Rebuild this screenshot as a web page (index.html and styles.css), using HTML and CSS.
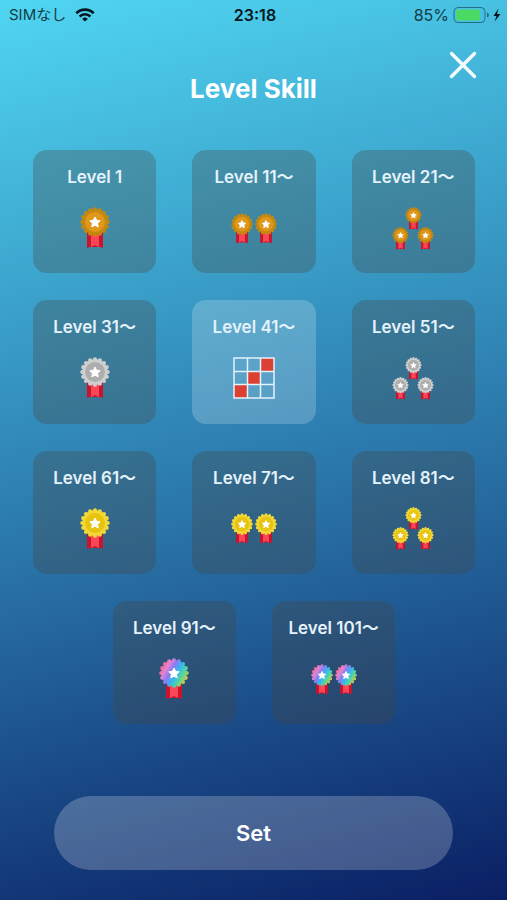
FILE: index.html
```html
<!DOCTYPE html>
<html lang="en">
<head>
<meta charset="utf-8">
<meta name="viewport" content="width=device-width, initial-scale=1">
<title>Level Skill</title>
<link rel="stylesheet" href="styles.css">
</head>
<body>
<svg class="defs" aria-hidden="true">
  <defs>
    <linearGradient id="rainbow" gradientUnits="userSpaceOnUse" x1="2" y1="8" x2="27" y2="23">
      <stop offset="0" stop-color="#f0648c"/>
      <stop offset=".2" stop-color="#e684cc"/>
      <stop offset=".38" stop-color="#8a7cf4"/>
      <stop offset=".58" stop-color="#35b6f2"/>
      <stop offset=".78" stop-color="#4ed6a4"/>
      <stop offset="1" stop-color="#d8c840"/>
    </linearGradient>
    <symbol id="medal" viewBox="0 0 30 42">
      <path d="M7 25h16v16l-3-1h-10l-3 1z" fill="#c8142c"/>
      <path d="M11 25h8v15l-4-2-4 2z" fill="#fb4658"/>
      <circle class="medal-edge" cx="15" cy="15" r="12.7" pathLength="16" stroke-width="4.2" stroke-linecap="round" stroke-dasharray="0 1"/>
      <circle class="medal-face" cx="15" cy="15" r="10"/>
      <path d="M15 10l1.6 3.3 3.6.5-2.6 2.5.6 3.6-3.2-1.7-3.2 1.7.6-3.6-2.6-2.5 3.6-.5z" fill="#fff" stroke="#fff" stroke-width="1" stroke-linejoin="round"/>
    </symbol>
  </defs>
</svg>
<div class="screen">
  <div class="status">
    <div class="status-left">
      <span>SIMなし</span>
      <svg width="20" height="14" viewBox="0 0 20 14" fill="none" stroke="#06161c" stroke-width="2.6" aria-hidden="true">
        <path d="M1.3 5.2a12.4 12.4 0 0 1 17.4 0M4.6 8.5a7.7 7.7 0 0 1 10.8 0"/>
        <path d="M10 13.6L7.2 10.9a4 4 0 0 1 5.6 0z" fill="#06161c" stroke="none"/>
      </svg>
    </div>
    <time class="clock">23:18</time>
    <div class="status-right">
      <span>85%</span>
      <svg width="48" height="16" viewBox="0 0 48 16" aria-hidden="true">
        <rect x="1" y=".5" width="31" height="15" rx="4" fill="none" stroke="#236f88"/>
        <rect x="3" y="2.5" width="24" height="11" rx="2" fill="#4cd964"/>
        <path d="M34 5.5q2 .5 2 2.5t-2 2.5z" fill="#236f88"/>
        <path d="M45.500 1.500L40.500 9h3L41.500 14.500 47.500 7h-3.500z" fill="#06161c"/>
      </svg>
    </div>
  </div>
  <header class="header">
    <h1 class="title">Level Skill</h1>
    <button class="close" type="button" aria-label="Close">
      <svg width="28" height="28" viewBox="0 0 28 28" fill="none" stroke="#f4fcff" stroke-width="3.4" stroke-linecap="round"><path d="M2.500 2.500l23 23M25.500 2.500l-23 23"/></svg>
    </button>
  </header>
  <main>
    <div class="levels">
      <button class="card bronze" type="button"><span>Level 1</span><span class="icon one"><svg><use href="#medal"/></svg></span></button>
      <button class="card bronze" type="button"><span>Level 11〜</span><span class="icon two"><svg><use href="#medal"/></svg><svg><use href="#medal"/></svg></span></button>
      <button class="card bronze" type="button"><span>Level 21〜</span><span class="icon three"><svg><use href="#medal"/></svg><svg><use href="#medal"/></svg><svg><use href="#medal"/></svg></span></button>
      <button class="card silver" type="button"><span>Level 31〜</span><span class="icon one"><svg><use href="#medal"/></svg></span></button>
      <button class="card selected" type="button" aria-pressed="true"><span>Level 41〜</span><span class="icon">
        <svg width="42" height="42" viewBox="0 0 42 42">
          <path d="M28 1h13v13H28zM14.500 14.500h13v13h-13zM1 28h13v13H1z" fill="#dc4032"/>
          <path d="M1 1h40v40H1zM14.500 1v40M27.500 1v40M1 14.500h40M1 27.500h40" fill="none" stroke="#e4f2fb" stroke-width="1.500"/>
        </svg></span></button>
      <button class="card silver" type="button"><span>Level 51〜</span><span class="icon three"><svg><use href="#medal"/></svg><svg><use href="#medal"/></svg><svg><use href="#medal"/></svg></span></button>
      <button class="card gold" type="button"><span>Level 61〜</span><span class="icon one"><svg><use href="#medal"/></svg></span></button>
      <button class="card gold" type="button"><span>Level 71〜</span><span class="icon two"><svg><use href="#medal"/></svg><svg><use href="#medal"/></svg></span></button>
      <button class="card gold" type="button"><span>Level 81〜</span><span class="icon three"><svg><use href="#medal"/></svg><svg><use href="#medal"/></svg><svg><use href="#medal"/></svg></span></button>
      <button class="card rainbow indent" type="button"><span>Level 91〜</span><span class="icon one"><svg><use href="#medal"/></svg></span></button>
      <button class="card rainbow" type="button"><span>Level 101〜</span><span class="icon two"><svg><use href="#medal"/></svg><svg><use href="#medal"/></svg></span></button>
    </div>
    <button class="set" type="button">Set</button>
  </main>
</div>
</body>
</html>
```
FILE: styles.css
```css
* {
  box-sizing: border-box;
}

body {
  margin: 0;
  font-family: Inter, "Noto Sans CJK JP", sans-serif;
  color: #fff;
}

button {
  border: 0;
  padding: 0;
  background: none;
  font: inherit;
  color: inherit;
  cursor: pointer;
}

.defs {
  position: absolute;
  width: 0;
  height: 0;
}

.screen {
  min-height: 100vh;
  background: linear-gradient(166deg, #50d6f2 0%, #2d7eb0 50%, #0a1f63 100%);
}

.status {
  display: grid;
  grid-template-columns: 1fr auto 1fr;
  align-items: center;
  height: 30px;
  padding: 0 6px 0 9px;
  font-size: 16px;
  line-height: 20px;
  color: #123c48;
}

.status-left,
.status-right {
  display: flex;
  align-items: center;
}

.status-left {
  gap: 9px;
  font-size: 15px;
}

.status-right {
  justify-content: flex-end;
  gap: 4px;
}

.clock {
  font-weight: 600;
  color: #06161c;
}

.header {
  display: grid;
  padding: 21px 30px 0;
}

.title,
.close {
  grid-area: 1 / 1;
}

.title {
  margin: 22px 0 0;
  font-size: 26px;
  line-height: 32px;
  font-weight: 700;
  text-align: center;
}

.close {
  place-self: start end;
  height: 28px;
}

.close svg {
  display: block;
}

.levels {
  display: grid;
  grid-template-columns: repeat(6, 1fr);
  gap: 27px 36px;
  padding: 45px 32px 0 33px;
}

.card {
  grid-column: span 2;
  aspect-ratio: 1;
  display: flex;
  flex-direction: column;
  align-items: center;
  gap: 19px;
  padding-top: 16px;
  border-radius: 14px;
  background: rgba(72, 66, 60, 0.3);
  font-size: 17px;
  line-height: 22px;
  font-weight: 600;
  white-space: nowrap;
  color: #e4f2fb;
}

.card.selected {
  background: rgba(255, 255, 255, 0.2);
}

.indent {
  grid-column: 2 / span 2;
}

.icon {
  display: flex;
  flex-wrap: wrap;
  justify-content: center;
  align-content: center;
  height: 42px;
}

.one svg {
  width: 30px;
  height: 42px;
}

.two {
  gap: 2px;
}

.two svg {
  width: 22px;
  height: 31px;
}

.three {
  width: 48px;
  column-gap: 8px;
}

.three svg {
  width: 17px;
  height: 23px;
}

.three svg:first-child {
  margin: 0 12px -3px;
}

.medal-edge {
  fill: var(--edge);
  stroke: var(--edge);
}

.medal-face {
  fill: var(--face);
}

.bronze {
  --edge: #c48810;
  --face: #df981c;
}

.silver {
  --edge: #cfcfcf;
  --face: #aeaeae;
}

.gold {
  --edge: #f2d838;
  --face: #e8c410;
}

.rainbow {
  --edge: url(#rainbow);
  --face: none;
}

.set {
  display: block;
  width: calc(100% - 108px);
  height: 74px;
  margin: 72px auto 30px;
  border-radius: 37px;
  background: rgba(255, 255, 255, 0.22);
  font-size: 22px;
  font-weight: 600;
}
```
